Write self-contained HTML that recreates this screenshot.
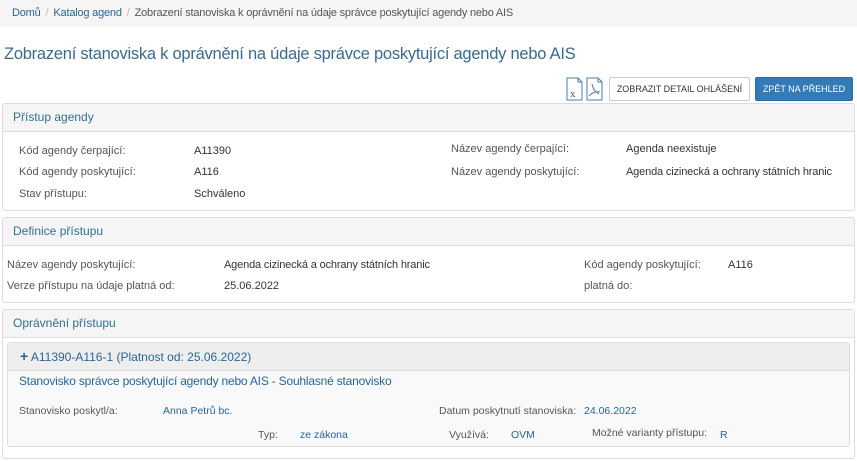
<!DOCTYPE html>
<html><head><meta charset="utf-8">
<style>
*{margin:0;padding:0;box-sizing:border-box}
body{width:857px;height:461px;background:#fff;font-family:"Liberation Sans",Arial,sans-serif;font-size:11px;color:#333;position:relative;overflow:hidden}
.a{position:absolute;white-space:nowrap}
.bc{left:0;top:0;width:857px;height:27px;background:#f5f5f5}
.l{color:#555}
.bl{color:#2a6496}
.panel{position:absolute;border:1px solid #ddd;border-radius:3px;background:#fff}
.ph{position:absolute;left:0;top:0;right:0;background:#f5f5f5;border-bottom:1px solid #ddd;color:#31708f;font-size:12px;padding-left:10px}
.btn{position:absolute;height:24px;border:1px solid #ccc;border-radius:2px;font-size:9px;text-align:center;line-height:22px}
</style></head><body>
<div class="a bc"></div>
<div class="a" style="left:12px;top:7px;color:#2a6496;letter-spacing:-0.2px">Domů<span style="color:#bbb;margin:0 5px">/</span>Katalog agend<span style="color:#bbb;margin:0 5px">/</span><span style="color:#555;margin:0">Zobrazení stanoviska k oprávnění na údaje správce poskytující agendy nebo AIS</span></div>
<div class="a" style="left:4px;top:45px;font-size:16.5px;color:#3a6a90;letter-spacing:-0.25px">Zobrazení stanoviska k oprávnění na údaje správce poskytující agendy nebo AIS</div>

<svg class="a" style="left:565px;top:76px" width="40" height="26" viewBox="0 0 40 26">
<path d="M2 2h11l4 4v18H2z M13 2v4h4" fill="none" stroke="#4a7ea8" stroke-width="1"/>
<text x="5" y="21" font-family="Liberation Serif" font-size="11" fill="#2d5f86">x</text>
<path d="M22 2h11l4 4v18H22z M33 2v4h4" fill="none" stroke="#4a7ea8" stroke-width="1"/>
<path d="M27 8c1 4 2 7 7 10M24 20c3-3 6-5 11-4" fill="none" stroke="#4a7ea8" stroke-width="1"/>
</svg>
<div class="btn" style="left:609px;top:77px;width:141px;background:#fff;color:#333">ZOBRAZIT DETAIL OHLÁŠENÍ</div>
<div class="btn" style="left:755px;top:77px;width:98px;background:#337ab7;border-color:#2e6da4;color:#fff">ZPĚT NA PŘEHLED</div>

<div class="panel" style="left:2px;top:103px;width:853px;height:108px">
<div class="ph" style="height:28px;line-height:27px">Přístup agendy</div>
</div>
<div class="a l" style="left:19px;top:145px">Kód agendy čerpající:</div><div class="a" style="left:194px;top:145px">A11390</div>
<div class="a l" style="left:451px;top:143px">Název agendy čerpající:</div><div class="a" style="left:626px;top:143px">Agenda neexistuje</div>
<div class="a l" style="left:19px;top:166px">Kód agendy poskytující:</div><div class="a" style="left:194px;top:166px">A116</div>
<div class="a l" style="left:451px;top:166px">Název agendy poskytující:</div><div class="a" style="left:626px;top:166px;letter-spacing:-0.15px">Agenda cizinecká a ochrany státních hranic</div>
<div class="a l" style="left:19px;top:188px">Stav přístupu:</div><div class="a" style="left:194px;top:188px">Schváleno</div>

<div class="panel" style="left:2px;top:217px;width:853px;height:86px">
<div class="ph" style="height:28px;line-height:27px">Definice přístupu</div>
</div>
<div class="a l" style="left:7px;top:259px">Název agendy poskytující:</div><div class="a" style="left:224px;top:259px;letter-spacing:-0.15px">Agenda cizinecká a ochrany státních hranic</div>
<div class="a l" style="left:584px;top:259px">Kód agendy poskytující:</div><div class="a" style="left:728px;top:259px">A116</div>
<div class="a l" style="left:7px;top:280px">Verze přístupu na údaje platná od:</div><div class="a" style="left:224px;top:280px">25.06.2022</div>
<div class="a l" style="left:584px;top:280px">platná do:</div>

<div class="panel" style="left:2px;top:309px;width:853px;height:150px">
<div class="ph" style="height:28px;line-height:27px">Oprávnění přístupu</div>
</div>
<div class="panel" style="left:7px;top:342px;width:843px;height:105px;background:#f9f9f9">
<div class="ph" style="height:28px;line-height:27px;background:#eee;padding-left:12px;color:#2a6496"><b style="font-size:14px">+</b> A11390-A116-1 (Platnost od: 25.06.2022)</div>
</div>
<div class="a bl" style="left:19px;top:374px;font-size:12px;letter-spacing:-0.2px">Stanovisko správce poskytující agendy nebo AIS - Souhlasné stanovisko</div>
<div class="a l" style="left:19px;top:405px;font-size:10.5px">Stanovisko poskytl/a:</div><div class="a bl" style="left:163px;top:405px;font-size:10.5px">Anna Petrů bc.</div>
<div class="a l" style="left:439px;top:405px;font-size:10.5px">Datum poskytnutí stanoviska:</div><div class="a bl" style="left:584px;top:405px;font-size:10.5px">24.06.2022</div>
<div class="a l" style="left:258px;top:429px;font-size:10.5px">Typ:</div><div class="a bl" style="left:300px;top:429px;font-size:10.5px">ze zákona</div>
<div class="a l" style="left:449px;top:429px;font-size:10.5px">Využívá:</div><div class="a bl" style="left:511px;top:429px;font-size:10.5px">OVM</div>
<div class="a l" style="left:592px;top:427px;font-size:10.5px">Možné varianty přístupu:</div><div class="a bl" style="left:720px;top:429px;font-size:10.5px">R</div>
</body></html>
